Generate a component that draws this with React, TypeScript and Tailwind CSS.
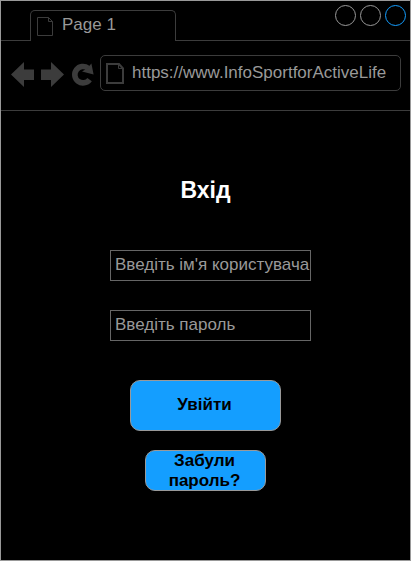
const line = "border-[#3c3c3c]";

function TabPageIcon() {
  return (
    <svg width="18" height="21" viewBox="0 0 18 21" fill="none" stroke="#3c3c3c">
      <path d="M1.5 1.5H12.5L16.5 5.5V19.5H1.5Z" />
      <path d="M12.5 1.5V5.5H16.5" />
    </svg>
  );
}

function AddressPageIcon() {
  return (
    <svg width="20" height="23" viewBox="0 0 20 23" fill="none" stroke="#3c3c3c" strokeWidth="2">
      <path d="M2 2H14L18 6.5V21H2Z" />
      <path d="M13.5 2V6.5H18" strokeWidth="1" />
    </svg>
  );
}

function NavIcons() {
  return (
    <svg width="86" height="28" viewBox="10 61 86 28" fill="#3c3c3c">
      <path d="M11 74.5L24 62V69.5H34V80H24V87Z" />
      <path d="M64 74.5L51 62V69.5H41V80H51V87Z" />
      <path d="M89.6 79.6A8.2 8.2 0 1 1 88 68.2" fill="none" stroke="#3c3c3c" strokeWidth="5.6" />
      <path d="M91.4 63.6L93.6 74.4L82 71.6L87 68.5Z" />
    </svg>
  );
}

function WindowCircle({ active = false }: { active?: boolean }) {
  return <span className={`size-[21px] rounded-full border ${active ? "border-[#149eff]" : "border-[#999999]"}`} />;
}

function Field({ text, label }: { text: string; label: string }) {
  return (
    <input
      aria-label={label}
      placeholder={text}
      className="block h-[31px] w-[201px] border border-[#666666] bg-black pb-[2px] pl-1 text-[17px] leading-5 text-[#999999] outline-none placeholder:text-[#999999]"
    />
  );
}

export default function App() {
  return (
    <div className="flex h-[561px] w-[411px] flex-col overflow-hidden border border-[#999999] bg-black font-['Liberation_Sans',Arial,sans-serif] text-[17px] text-[#999999]">
      <div className="flex h-10 shrink-0">
        <div className={`w-[29px] border-b ${line}`} />
        <div className={`mt-[9px] flex h-[31px] w-[146px] items-start rounded-t-[5px] border-x border-t ${line} pt-[5px] pl-[5px]`}>
          <TabPageIcon />
          <span className="-mt-px ml-2 leading-5">Page 1</span>
        </div>
        <div className={`flex flex-1 justify-end gap-1 border-b ${line} pt-1 pr-[4px]`}>
          <WindowCircle />
          <WindowCircle />
          <WindowCircle active />
        </div>
      </div>
      <div className={`flex h-[70px] shrink-0 border-b ${line} pl-[9px]`}>
        <div className="pt-5">
          <NavIcons />
        </div>
        <div className={`mt-[14px] ml-1 flex h-9 w-[301px] items-start rounded-[5px] border ${line} pt-[6px] pl-1`}>
          <AddressPageIcon />
          <span className="mt-px ml-[7px] leading-5">https://www.InfoSportforActiveLife</span>
        </div>
      </div>
      <main className="flex flex-col items-center pt-[65px]">
        <h1 className="text-[23px] leading-7 font-bold text-white">Вхід</h1>
        <form className="mt-[46px] flex flex-col items-center">
          <div className="flex flex-col gap-[29px] pl-[10px]">
            <Field text="Введіть ім'я користувача" label="Ім'я користувача" />
            <Field text="Введіть пароль" label="Пароль" />
          </div>
          <button type="button" className="mt-[39px] h-[51px] w-[151px] rounded-[10px] border border-[#999999] bg-[#149eff] pr-[2px] pb-[2px] font-bold text-black">
            Увійти
          </button>
          <button type="button" className="mt-[19px] h-[41px] w-[121px] rounded-[10px] border border-[#999999] bg-[#149eff] pr-[17px] pb-[2px] pl-[15px] leading-5 font-bold text-black">
            Забули пароль?
          </button>
        </form>
      </main>
    </div>
  );
}
